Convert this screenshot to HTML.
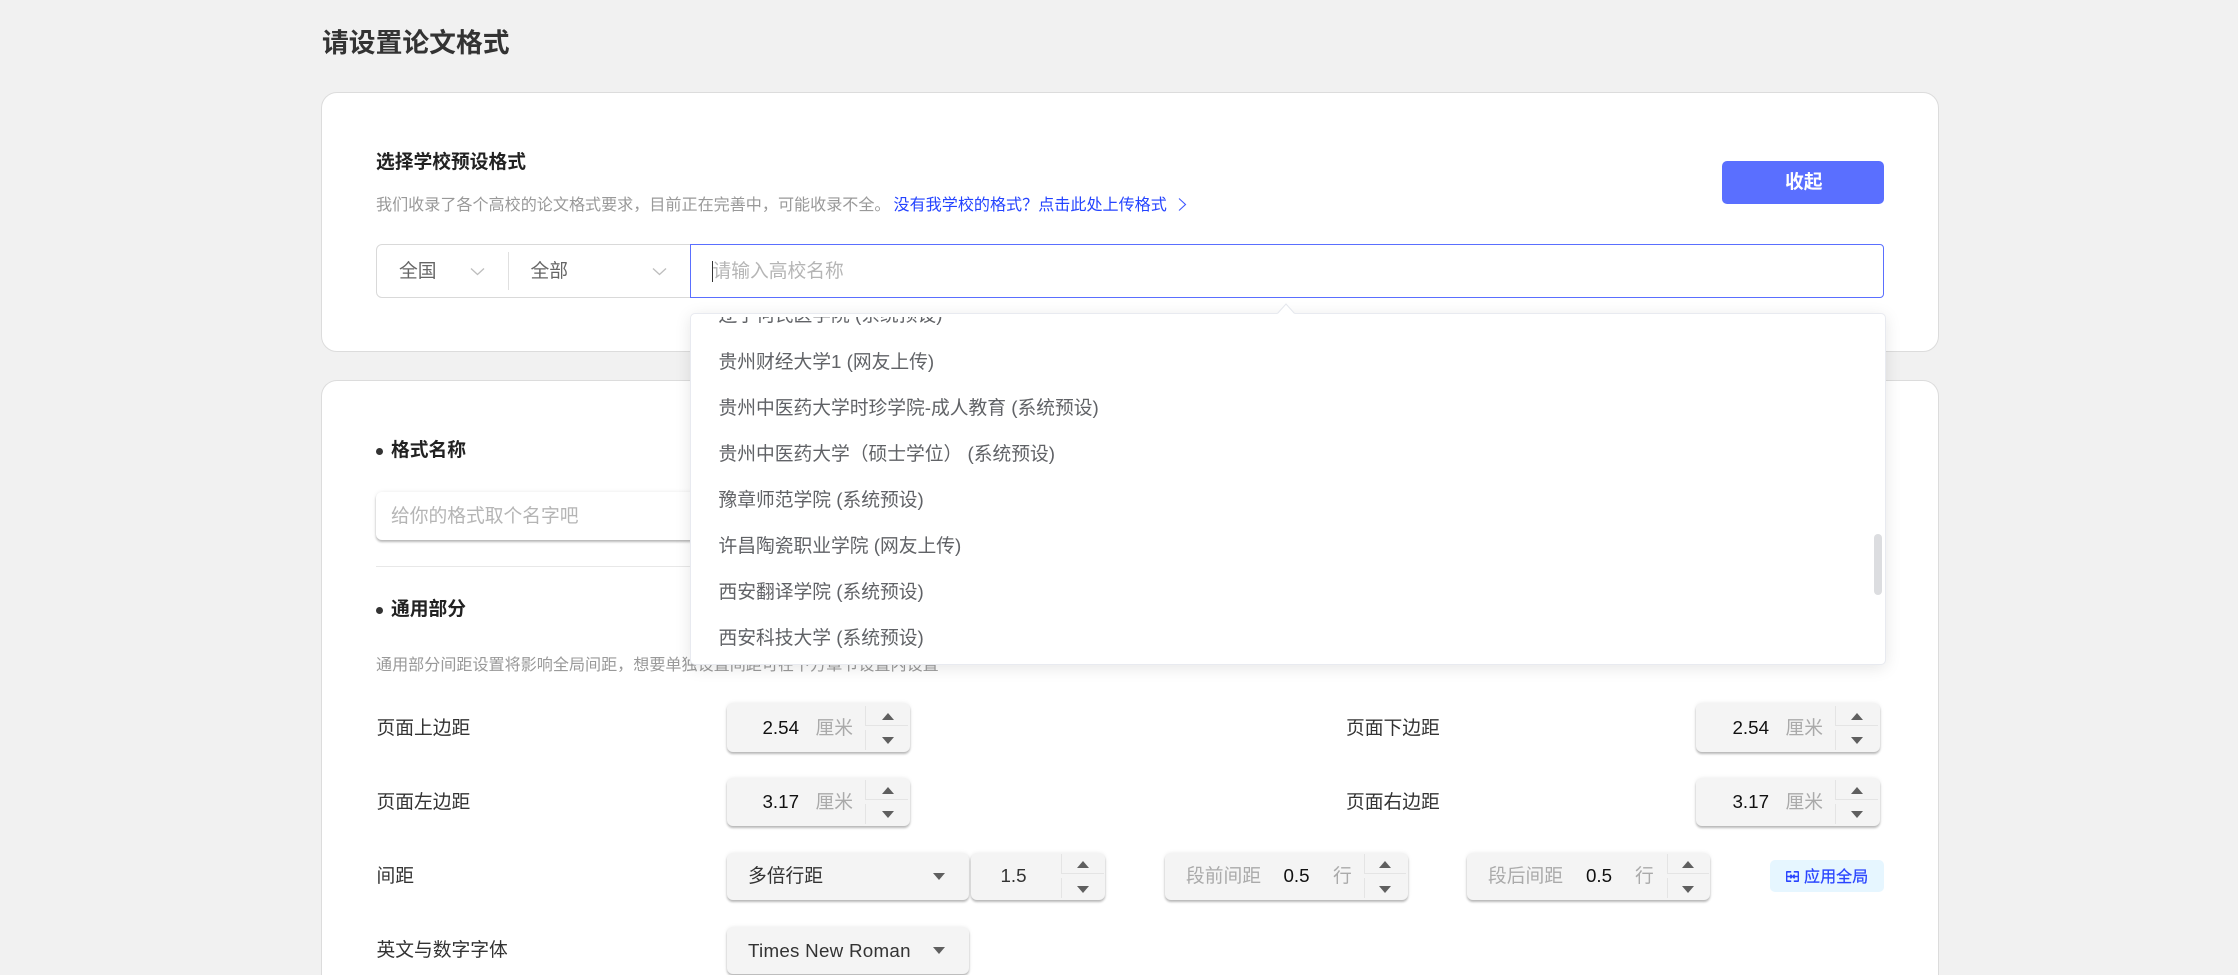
<!DOCTYPE html>
<html lang="zh-CN">
<head>
<meta charset="utf-8">
<title>请设置论文格式</title>
<style>
html,body{margin:0;padding:0;width:2238px;height:975px;overflow:hidden;background:#f1f1f1}
body{position:relative;font-family:"Liberation Sans","Noto Sans CJK SC",sans-serif;font-size:18.76px;color:#333}
.a,.t{position:absolute}
.t{white-space:nowrap;line-height:28px;height:28px;margin-top:-13.3px}
.card{position:absolute;background:#fff;border:1.34px solid #dcdcdc;border-radius:16px;box-sizing:border-box}
.b{font-weight:700;color:#222}
.g{font-size:16.08px;color:#999}
.item{color:#606266}
.box{position:absolute;background:#f4f4f4;border-radius:6px;box-shadow:0 2px 2px rgba(0,0,0,.26),0 0 4px rgba(0,0,0,.08)}
.v{position:absolute;width:1px;background:#e4e4e4}
.h{position:absolute;height:1px;background:#e4e4e4}
.up,.dn,.sel{position:absolute;width:0;height:0;border-left:6px solid transparent;border-right:6px solid transparent}
.up{border-bottom:7px solid #5f5f5f}
.dn,.sel{border-top:7px solid #5f5f5f}
.up,.dn{margin-left:-.5px}
.u{color:#aaa}
.n{color:#111}
</style>
</head>
<body>
<div class="t" style="left:322px;top:42px;font-size:26.8px;font-weight:700;color:#333">请设置论文格式</div>

<div class="card" style="left:321px;top:92px;width:1618px;height:260px"></div>
<div class="t b" style="left:376px;top:161px">选择学校预设格式</div>
<div class="t g" style="left:376px;top:204px">我们收录了各个高校的论文格式要求，目前正在完善中，可能收录不全。</div>
<div class="t" style="left:893.5px;top:204px;font-size:16.08px;color:#2443ff">没有我学校的格式？点击此处上传格式</div>
<svg class="a" style="left:1176px;top:197px" width="12" height="15" viewBox="0 0 12 15"><path d="M3 1.5 9.5 7.5 3 13.5" fill="none" stroke="#3f57ff" stroke-width="1.1"/></svg>

<div class="a" style="left:1722px;top:161px;width:162px;height:43px;background:#5a6fff;border-radius:5px"></div>
<div class="t" style="left:1785px;top:181px;color:#fff;font-weight:700">收起</div>

<div class="a" style="left:376px;top:244px;width:320px;height:53.5px;box-sizing:border-box;border:1.34px solid #d9d9d9;border-radius:6px 0 0 6px;background:#fff"></div>
<div class="a" style="left:508px;top:252px;width:1px;height:38px;background:#e0e0e0"></div>
<div class="t" style="left:399px;top:270px;color:#666">全国</div>
<svg class="a" style="left:470px;top:267px" width="15" height="9" viewBox="0 0 15 9"><path d="M1 1.5 7.5 7.5 14 1.5" fill="none" stroke="#bdbdbd" stroke-width="1.3"/></svg>
<div class="t" style="left:530.5px;top:270px;color:#666">全部</div>
<svg class="a" style="left:652px;top:267px" width="15" height="9" viewBox="0 0 15 9"><path d="M1 1.5 7.5 7.5 14 1.5" fill="none" stroke="#bdbdbd" stroke-width="1.3"/></svg>

<div class="a" style="left:690px;top:244px;width:1193.5px;height:53.5px;box-sizing:border-box;border:1.5px solid #5a6fff;border-radius:0 4px 4px 0;background:#fff"></div>
<div class="a" style="left:712px;top:261px;width:1px;height:21px;background:#333"></div>
<div class="t" style="left:712.5px;top:270px;color:#b5b5b5">请输入高校名称</div>

<div class="card" style="left:321px;top:380px;width:1618px;height:595px;border-bottom:none;border-radius:16px 16px 0 0"></div>
<div class="a" style="left:376px;top:447.5px;width:7px;height:7px;border-radius:50%;background:#333"></div>
<div class="t b" style="left:391px;top:449px">格式名称</div>
<div class="box" style="left:376px;top:492px;width:700px;height:48px;background:#fff"></div>
<div class="t" style="left:391px;top:515px;color:#b5b5b5">给你的格式取个名字吧</div>
<div class="a" style="left:376px;top:566px;width:1507px;height:1px;background:#e8e8e8"></div>
<div class="a" style="left:376px;top:606.5px;width:7px;height:7px;border-radius:50%;background:#333"></div>
<div class="t b" style="left:391px;top:608px">通用部分</div>
<div class="t g" style="left:376px;top:664px">通用部分间距设置将影响全局间距，想要单独设置间距可在下方章节设置内设置</div>

<!-- row 1 -->
<div class="t" style="left:376.5px;top:727px">页面上边距</div>
<div class="box" style="left:727px;top:703px;width:183px;height:49px"></div>
<div class="t n" style="left:762.5px;top:727px">2.54</div>
<div class="t u" style="left:815.5px;top:727px">厘米</div>
<div class="v" style="left:865px;top:706px;height:19px"></div><div class="v" style="left:865px;top:730px;height:20px"></div>
<div class="h" style="left:865px;top:725px;width:43px"></div>
<div class="up" style="left:882px;top:713px"></div><div class="dn" style="left:882px;top:737px"></div>

<div class="t" style="left:1346px;top:727px">页面下边距</div>
<div class="box" style="left:1696px;top:703px;width:184px;height:49px"></div>
<div class="t n" style="left:1732.5px;top:727px">2.54</div>
<div class="t u" style="left:1785.5px;top:727px">厘米</div>
<div class="v" style="left:1835px;top:706px;height:19px"></div><div class="v" style="left:1835px;top:730px;height:20px"></div>
<div class="h" style="left:1835px;top:725px;width:43px"></div>
<div class="up" style="left:1851.5px;top:713px"></div><div class="dn" style="left:1851.5px;top:737px"></div>

<!-- row 2 -->
<div class="t" style="left:376.5px;top:801px">页面左边距</div>
<div class="box" style="left:727px;top:778px;width:183px;height:48px"></div>
<div class="t n" style="left:762.5px;top:801px">3.17</div>
<div class="t u" style="left:815.5px;top:801px">厘米</div>
<div class="v" style="left:865px;top:780px;height:19px"></div><div class="v" style="left:865px;top:804px;height:20px"></div>
<div class="h" style="left:865px;top:799px;width:43px"></div>
<div class="up" style="left:882px;top:787px"></div><div class="dn" style="left:882px;top:811px"></div>

<div class="t" style="left:1346px;top:801px">页面右边距</div>
<div class="box" style="left:1696px;top:778px;width:184px;height:48px"></div>
<div class="t n" style="left:1732.5px;top:801px">3.17</div>
<div class="t u" style="left:1785.5px;top:801px">厘米</div>
<div class="v" style="left:1835px;top:780px;height:19px"></div><div class="v" style="left:1835px;top:804px;height:20px"></div>
<div class="h" style="left:1835px;top:799px;width:43px"></div>
<div class="up" style="left:1851.5px;top:787px"></div><div class="dn" style="left:1851.5px;top:811px"></div>

<!-- row 3 -->
<div class="t" style="left:376.5px;top:875px">间距</div>
<div class="box" style="left:727px;top:852.5px;width:242px;height:47.5px"></div>
<div class="t" style="left:748px;top:875.5px">多倍行距</div>
<div class="sel" style="left:932.5px;top:873px"></div>
<div class="box" style="left:971px;top:852.5px;width:134px;height:47.5px"></div>
<div class="t" style="left:1000.5px;top:875px">1.5</div>
<div class="v" style="left:1061px;top:854px;height:19px"></div><div class="v" style="left:1061px;top:878px;height:20px"></div>
<div class="h" style="left:1061px;top:873px;width:43px"></div>
<div class="up" style="left:1077.5px;top:861px"></div><div class="dn" style="left:1077.5px;top:886px"></div>

<div class="box" style="left:1165px;top:852.5px;width:243px;height:47.5px"></div>
<div class="t u" style="left:1186px;top:875px">段前间距</div>
<div class="t n" style="left:1283.5px;top:875px">0.5</div>
<div class="t u" style="left:1333px;top:875px">行</div>
<div class="v" style="left:1363.5px;top:854px;height:19px"></div><div class="v" style="left:1363.5px;top:878px;height:20px"></div>
<div class="h" style="left:1363.5px;top:873px;width:42px"></div>
<div class="up" style="left:1379.5px;top:861px"></div><div class="dn" style="left:1379.5px;top:886px"></div>

<div class="box" style="left:1467px;top:852.5px;width:243px;height:47.5px"></div>
<div class="t u" style="left:1488px;top:875px">段后间距</div>
<div class="t n" style="left:1586px;top:875px">0.5</div>
<div class="t u" style="left:1635px;top:875px">行</div>
<div class="v" style="left:1667px;top:854px;height:19px"></div><div class="v" style="left:1667px;top:878px;height:20px"></div>
<div class="h" style="left:1667px;top:873px;width:42px"></div>
<div class="up" style="left:1682.5px;top:861px"></div><div class="dn" style="left:1682.5px;top:886px"></div>

<div class="a" style="left:1770px;top:860px;width:114px;height:32px;background:#e6f6ff;border-radius:5px"></div>
<svg class="a" style="left:1786px;top:871px" width="13" height="11" viewBox="0 0 13 11"><path d="M5.2.8H1.2a.6.6 0 0 0-.6.6v8.2a.6.6 0 0 0 .6.6h4M7.8.8h4a.6.6 0 0 1 .6.6v8.2a.6.6 0 0 1-.6.6h-4M.8 5.5h4M12.2 5.5h-4M4.4 3.6 6 5.5 4.4 7.4M8.6 3.6 7 5.5 8.6 7.4" fill="none" stroke="#2a45ff" stroke-width="1.6"/></svg>
<div class="t" style="left:1804px;top:876px;font-size:16.08px;color:#2a45ff;-webkit-text-stroke:.25px #2a45ff">应用全局</div>

<!-- row 4 -->
<div class="t" style="left:376.5px;top:949px">英文与数字字体</div>
<div class="box" style="left:727px;top:927px;width:242px;height:47px"></div>
<div class="t" style="left:748px;top:950px;letter-spacing:.27px">Times New Roman</div>
<div class="sel" style="left:932.5px;top:947px"></div>

<!-- dropdown -->
<svg class="a" style="left:1275px;top:302px;z-index:6" width="22" height="13" viewBox="0 0 22 13"><path d="M2 12 11 2 20 12" fill="#fff" stroke="#e4e7ed" stroke-width="1"/><path d="M2 12.5h18" stroke="#fff" stroke-width="1.4"/></svg>
<div class="a" style="left:690px;top:312.5px;width:1195.5px;height:352px;box-sizing:border-box;background:#fff;border:1px solid #e8eaf0;border-radius:5px;box-shadow:0 3px 16px rgba(0,0,0,.1);z-index:5;overflow:hidden">
  <div style="position:absolute;left:0;right:0;top:3px;bottom:0;overflow:hidden">
    <div class="t item" style="left:27.5px;top:-2.2px">辽宁何氏医学院 (系统预设)</div>
    <div class="t item" style="left:27.5px;top:45px">贵州财经大学1 (网友上传)</div>
    <div class="t item" style="left:27.5px;top:90.5px">贵州中医药大学时珍学院-成人教育 (系统预设)</div>
    <div class="t item" style="left:27.5px;top:136.5px">贵州中医药大学（硕士学位） (系统预设)</div>
    <div class="t item" style="left:27.5px;top:182.5px">豫章师范学院 (系统预设)</div>
    <div class="t item" style="left:27.5px;top:228.5px">许昌陶瓷职业学院 (网友上传)</div>
    <div class="t item" style="left:27.5px;top:274.5px">西安翻译学院 (系统预设)</div>
    <div class="t item" style="left:27.5px;top:320.5px">西安科技大学 (系统预设)</div>
  </div>
  <div class="a" style="left:1183px;top:220px;width:8px;height:61px;border-radius:4px;background:#dcdde0"></div>
</div>
</body>
</html>
